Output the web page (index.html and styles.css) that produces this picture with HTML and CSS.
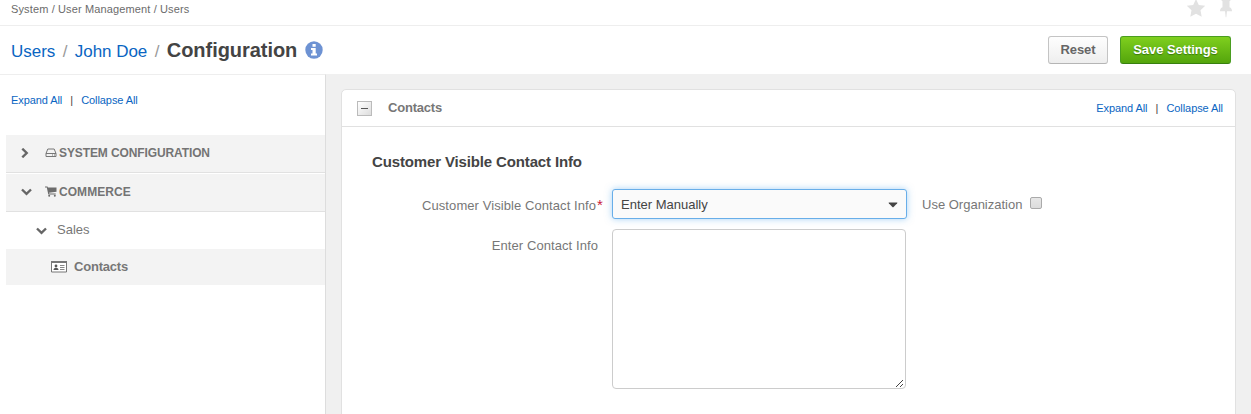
FILE: index.html
```html
<!DOCTYPE html>
<html lang="en">
<head>
<meta charset="utf-8">
<title>Configuration - John Doe - Users</title>
<link rel="stylesheet" href="styles.css">
</head>
<body>
<nav class="topbar">
  <span class="crumbs">System / User Management / Users</span>
  <span class="tools">
    <svg class="star" width="20" height="18" viewBox="0 0 20 18"><path d="M10 0l2.800 5.900 6.400.9-4.700 4.500 1.200 6.400L10 14.700l-5.700 3 1.200-6.400L.8 6.800l6.400-.9z"/></svg>
    <svg class="pin" width="14" height="19" viewBox="0 0 14 19"><path d="M2.500 0h9v1.500l-1 .8v6c1.700.6 2.500 2 2.500 4H8l-.7 6h-.6l-.7-6H1c0-2 .8-3.400 2.500-4v-6l-1-.8z"/></svg>
  </span>
</nav>
<header class="titlebar">
  <h1 class="title"><a>Users</a><i>/</i><a>John Doe</a><i>/</i><strong>Configuration</strong>
    <svg class="info" width="18" height="18" viewBox="0 0 18 18"><circle cx="9" cy="9" r="8.700" fill="#6d92d3"/><path d="M7.500 3h3.200v2.700H7.500zM6 7h4.700v5.500H12v2H6v-2h1.500V9H6z" fill="#fff"/></svg>
  </h1>
  <div class="actions"><button class="btn">Reset</button><button class="btn save">Save Settings</button></div>
</header>
<main class="layout">
  <aside class="sidebar">
    <div class="toggles"><a>Expand All</a><span>|</span><a>Collapse All</a></div>
    <div class="tree">
      <div class="node group system">
        <svg class="right" width="8" height="10" viewBox="0 0 8 10"><path d="M1.300 .7l4.400 4.300-4.400 4.300"/></svg>
        <svg class="icon" width="12" height="10" viewBox="0 0 12 10"><path d="M1 5.500L2.800 1h6.400L11 5.500v3H1zM1 5.500h10M7 7h1M9 7h1" fill="none" stroke="#777"/></svg>
        <span>SYSTEM CONFIGURATION</span>
      </div>
      <div class="node group commerce">
        <svg class="down" width="11" height="8" viewBox="0 0 11 8"><path d="M1 1.500l4.500 4.300 4.500-4.300"/></svg>
        <svg class="icon" width="12" height="11" viewBox="0 0 12 11"><path d="M0 .5h2.500l.4 1H11.500v4.300L4 6.700l.2.800h6.500v1H3.300L1.800 1.500H0z" fill="#6c6c6c"/><circle cx="4.200" cy="9.700" r="1" fill="#6c6c6c"/><circle cx="9.800" cy="9.700" r="1" fill="#6c6c6c"/></svg>
        <span>COMMERCE</span>
      </div>
      <div class="node sales">
        <svg class="down" width="11" height="8" viewBox="0 0 11 8"><path d="M1 1.500l4.500 4.300 4.500-4.300"/></svg>
        <span>Sales</span>
      </div>
      <div class="node current">
        <svg width="16" height="12" viewBox="0 0 16 12"><path d="M.5 1h15v10H.5z" fill="#fff" stroke="#777"/><path d="M0 0h16v2H0z" fill="#777"/><circle cx="5" cy="5" r="1.400" fill="#555"/><path d="M2.500 9c0-3 5-3 5 0z" fill="#555"/><path d="M9 4.500h4.500M9 6.500h4.500M9 8.500h4.500" stroke="#888"/></svg>
        <span>Contacts</span>
      </div>
    </div>
  </aside>
  <section class="content">
    <div class="card">
      <div class="card-head">
        <span class="collapse"></span><span class="card-title">Contacts</span>
        <div class="toggles"><a>Expand All</a><span>|</span><a>Collapse All</a></div>
      </div>
      <h2 class="section-title">Customer Visible Contact Info</h2>
      <div class="row first">
        <label class="label">Customer Visible Contact Info<em>*</em></label>
        <div class="select"><span>Enter Manually</span><svg width="10" height="6" viewBox="0 0 10 6"><path d="M1 .5h8Q9.800.5 9.200 1.200L5.600 5q-.6.6-1.200 0L.8 1.200Q.2.500 1 .5z" fill="#444"/></svg></div>
        <span class="use">Use Organization</span><span class="check"></span>
      </div>
      <div class="row">
        <label class="label second">Enter Contact Info</label>
        <div class="area"><svg width="8" height="8" viewBox="0 0 8 8" shape-rendering="crispEdges"><path d="M0 7h1v1H0zM1 6h1v1H1zM2 5h1v1H2zM3 4h1v1H3zM4 3h1v1H4zM5 2h1v1H5zM6 1h1v1H6zM4 7h1v1H4zM5 6h1v1H5zM6 5h1v1H6z" fill="#444"/></svg></div>
      </div>
    </div>
  </section>
</main>
</body>
</html>
```
FILE: styles.css
```css
* { box-sizing: border-box; }
body { margin: 0; height: 414px; overflow: hidden; background: #fff; color: #777; font: 13px/18px "Liberation Sans", Arial, sans-serif; display: flex; flex-direction: column; }
svg { display: block; flex: none; }
a { color: #0a65c2; }
.topbar { height: 26px; flex: none; border-bottom: 1px solid #eee; display: flex; justify-content: space-between; padding: 0 18px 0 11px; font-size: 11px; color: #6b6b6b; }
.crumbs { letter-spacing: .13px; }
.tools { display: flex; gap: 13px; fill: #e2e2e2; }
.star, .pin { margin-top: -1px; }
.titlebar { height: 48px; flex: none; display: flex; justify-content: space-between; padding: 10px 20px 0 11px; }
.title { margin: 0; height: 28px; display: flex; align-items: center; font-size: 17px; font-weight: 400; line-height: 28px; }
.title a, .title i { padding-top: 4px; letter-spacing: -.03px; }
.title i { font-style: normal; color: #999; width: 19.500px; text-align: center; }
.title strong { font-size: 20px; color: #444; letter-spacing: -.05px; }
.info { margin-left: 8px; }
.actions { display: flex; gap: 12px; }
.btn { height: 28px; width: 60px; padding: 0; border: 1px solid #c4c4c4; border-bottom-color: #b5b5b5; border-radius: 3px; background: linear-gradient(#fefefe, #eee); font: bold 13px/24px "Liberation Sans", Arial, sans-serif; letter-spacing: -.05px; color: #666; }
.save { width: 111px; color: #fff; border-color: #4a9d20 #4a9d20 #37800f; background: linear-gradient(#7fcf1e, #54a50c); text-shadow: 0 1px 1px #37780c; }
.layout { flex: 1; display: flex; min-height: 0; }
.sidebar { width: 326px; flex: none; border-right: 1px solid #ddd; border-top: 1px solid #eee; padding: 16px 0 0 6px; }
.toggles { display: flex; font-size: 11px; line-height: 18px; letter-spacing: -.08px; color: #444; }
.toggles span { width: 19px; text-align: center; }
.sidebar .toggles { padding-left: 5px; }
.tree { padding-top: 26px; }
.node { display: flex; align-items: center; }
.right path, .down path { fill: none; stroke: #666; stroke-width: 2.400; }
.group { height: 38px; margin-bottom: 1px; background: #f3f3f3; border-bottom: 1px solid #e1e1e1; padding: 0 0 2px 15px; font-size: 12px; font-weight: 700; color: #747474; }
.system { letter-spacing: -.11px; }
.commerce { letter-spacing: .05px; }
.right { margin-right: 15px; }
.group .down { margin-right: 13px; margin-top: 1px; }
.group .icon { margin-right: 2px; }
.group .right + .icon { margin-left: 1px; }
.sales { height: 37px; margin-top: -1px; padding: 0 0 1px 30px; gap: 10px; }
.sales .down { margin-top: 2px; }
.current { height: 36px; background: #f3f3f3; padding: 0 0 1px 45px; gap: 7px; font-weight: 700; letter-spacing: -.2px; }
.content { flex: 1; background: #f0f0f0; padding: 15px 15px 0; }
.card { height: 340px; border: 1px solid #e1e1e1; border-radius: 5px 5px 0 0; background: #fff; }
.card-head { height: 37px; border-bottom: 1px solid #e1e1e1; display: flex; align-items: center; padding: 0 12px 0 15px; }
.collapse { width: 15px; height: 15px; border: 1px solid #bbb; background: linear-gradient(135deg, #fff, #ddd); display: grid; place-items: center; }
.collapse::after { content: ""; width: 7px; height: 1px; background: #555; }
.card-title { margin-left: 16px; font-weight: 700; letter-spacing: -.2px; }
.card-head .toggles { margin-left: auto; }
.section-title { margin: 25px 0 0 30px; color: #444; font-size: 15px; line-height: 20px; letter-spacing: -.14px; }
.row { display: flex; align-items: flex-start; }
.first { margin-top: 17px; margin-bottom: 10px; }
.label { width: 262px; margin-right: 8px; text-align: right; padding-top: 8px; letter-spacing: .08px; }
.first .label { padding-right: 1px; }
.label em { font-style: normal; font-size: 15px; line-height: 10px; color: #c81c3c; margin-left: 1px; }
.second { padding-right: 6px; }
.select { width: 295px; height: 30px; border: 1px solid #68aee9; border-radius: 3px; background: #fafafa; box-shadow: 0 0 7px rgba(82,168,236,.5); display: flex; justify-content: space-between; align-items: center; padding: 1px 8px 0; color: #444; }
.use { margin: 7px 8px 0 15px; }
.check { width: 12px; height: 12px; margin-top: 8px; border: 1px solid #aaa; border-radius: 2px; background: linear-gradient(#e7e7e7, #dcdcdc); }
.area { width: 294px; height: 160px; border: 1px solid #ccc; border-radius: 4px; background: #fff; display: flex; align-items: flex-end; justify-content: flex-end; padding: 1px; }
```
